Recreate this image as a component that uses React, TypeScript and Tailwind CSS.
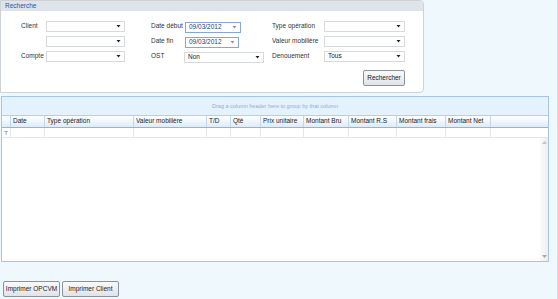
import React from 'react'

const COLUMNS = [
  { label: '', w: 9 },
  { label: 'Date', w: 34 },
  { label: 'Type opération', w: 89 },
  { label: 'Valeur mobilière', w: 73 },
  { label: 'T/D', w: 24 },
  { label: 'Qté', w: 30 },
  { label: 'Prix unitaire', w: 43 },
  { label: 'Montant Bru', w: 45 },
  { label: 'Montant R.S', w: 48 },
  { label: 'Montant frais', w: 49 },
  { label: 'Montant Net', w: 45 },
]

function Arrow({ blue = false }: { blue?: boolean }) {
  return (
    <svg width="5" height="3" viewBox="0 0 5 3" className="shrink-0">
      <path d="M0.5 0h4L2.5 2.5z" fill={blue ? '#7e92b0' : '#222'} />
    </svg>
  )
}

function Combo({ w, value, date }: { w: string; value?: string; date?: boolean }) {
  return (
    <div
      className={`${w} h-[11px] flex items-center justify-between pl-[3px] pr-[3px] bg-white border whitespace-nowrap ${
        date ? 'border-[#86a6d6] text-[#2a3e6a]' : 'border-[#d6dadf] text-[#222]'
      }`}
    >
      <span className="leading-none">{value}</span>
      <Arrow blue={date} />
    </div>
  )
}

function Label({ w, children }: { w: string; children: React.ReactNode }) {
  return <div className={`${w} h-[11px] leading-[8px] text-[#333] whitespace-nowrap`}>{children}</div>
}

function Button({ children, w }: { children: React.ReactNode; w: string }) {
  return (
    <button className={`${w} h-[16px] border border-[#8a929c] rounded-[2px] bg-gradient-to-b from-[#fafafa] to-[#e0e3e7] text-[#222] text-[6.5px] leading-none whitespace-nowrap`}>
      {children}
    </button>
  )
}

export default function App() {
  return (
    <div
      className="w-[558px] h-[299px] bg-[#eff9fd] text-[6.5px] flex flex-col overflow-hidden border-r border-[#c9e3ef]"
      style={{ fontFamily: '"Liberation Sans", Arial, sans-serif' }}
    >
      {/* Recherche */}
      <div className="w-[424px] h-[93px] bg-white border border-[#cdd2d8] rounded-r-[4px] flex flex-col shrink-0">
        <div className="h-[10px] bg-[#dfe4ea] text-[#2553a3] pl-[4px] leading-[10px] rounded-tr-[4px]">Recherche</div>
        <div className="flex pt-[10px]">
          <div className="flex pl-[20px]">
            <div className="flex flex-col gap-[4px] pt-[1px]">
              <Label w="w-[25px]">Client</Label>
              <Label w="w-[25px]">{''}</Label>
              <Label w="w-[25px]">Compte</Label>
            </div>
            <div className="flex flex-col gap-[4px]">
              <Combo w="w-[79px]" />
              <Combo w="w-[79px]" />
              <Combo w="w-[79px]" />
            </div>
          </div>
          <div className="flex ml-[26px]">
            <div className="flex flex-col gap-[4px] pt-[1px]">
              <Label w="w-[34px]">Date début</Label>
              <Label w="w-[34px]">Date fin</Label>
              <Label w="w-[34px]">OST</Label>
            </div>
            <div className="flex flex-col gap-[4px] pt-[1px]">
              <Combo w="w-[56px]" value="09/03/2012" date />
              <Combo w="w-[54px]" value="09/03/2012" date />
              <div className="-ml-[1px]">
                <Combo w="w-[80px]" value="Non" />
              </div>
            </div>
          </div>
          <div className="flex ml-[8px]">
            <div className="flex flex-col gap-[4px] pt-[1px]">
              <Label w="w-[52px]">Type opération</Label>
              <Label w="w-[52px]">Valeur mobilière</Label>
              <Label w="w-[52px]">Denouement</Label>
            </div>
            <div className="flex flex-col gap-[4px]">
              <Combo w="w-[81px]" />
              <Combo w="w-[81px]" />
              <Combo w="w-[81px]" value="Tous" />
              <div className="flex justify-end mt-[4px]">
                <Button w="w-[42px]">Rechercher</Button>
              </div>
            </div>
          </div>
        </div>
      </div>

      {/* Grid */}
      <div className="ml-[1px] mt-[3px] w-[548px] h-[166px] border border-[#a6c4ea] bg-white flex flex-col shrink-0">
        <div className="h-[19px] bg-[#e4f2fd] border-b border-[#b4cfee] flex items-center justify-center text-[5.5px] text-[#94acd6]">
          Drag a column header here to group by that column
        </div>
        <div className="h-[12px] bg-gradient-to-b from-[#ffffff] to-[#dcecfb] border-b border-[#8fb3e3] flex">
          {COLUMNS.map((c, i) => (
            <div
              key={i}
              style={{ width: c.w }}
              className="h-full border-r border-[#c6d6e8] pl-[2px] flex items-center text-[#222] leading-none shrink-0 whitespace-nowrap"
            >
              {c.label}
            </div>
          ))}
        </div>
        <div className="h-[10px] border-b border-[#e3e8ee] flex">
          {COLUMNS.map((c, i) => (
            <div
              key={i}
              style={{ width: c.w }}
              className="h-full border-r border-[#e3e8ee] flex items-center justify-center shrink-0"
            >
              {i === 0 && <span className="text-[6px] text-[#5878b8] leading-none">T</span>}
            </div>
          ))}
        </div>
        <div className="flex-1 flex justify-end">
          <div className="w-[8px] bg-gradient-to-r from-[#fafafa] to-[#eeeeee] flex flex-col items-center justify-between py-[3px]">
            <svg width="5" height="3" viewBox="0 0 5 3">
              <path d="M0 3h5L2.5 0z" fill="#c4c4c4" />
            </svg>
            <svg width="5" height="3" viewBox="0 0 5 3">
              <path d="M0 0h5L2.5 3z" fill="#a8a8a8" />
            </svg>
          </div>
        </div>
      </div>

      {/* Print buttons */}
      <div className="flex gap-[2px] ml-[3px] mt-[19px]">
        <Button w="w-[57px]">Imprimer OPCVM</Button>
        <Button w="w-[57px]">Imprimer Client</Button>
      </div>
    </div>
  )
}
